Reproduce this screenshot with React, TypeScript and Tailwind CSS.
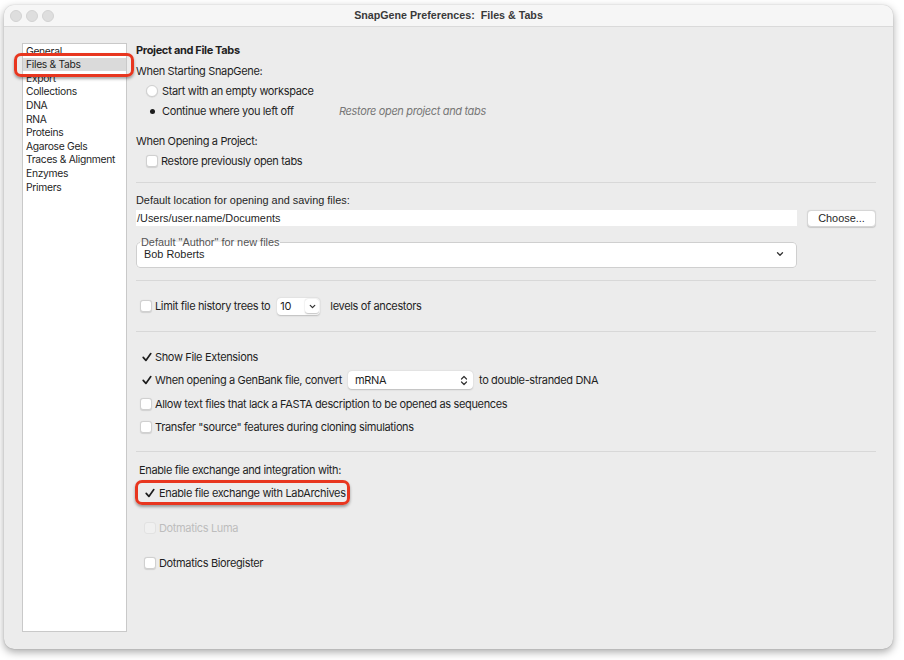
import React from 'react';
import clsx from 'clsx';

const ui = '[font-family:Inter,"Noto_Sans",sans-serif] tracking-[-0.35px]';
const helv = '[font-family:"Liberation_Sans",Arial,sans-serif] tracking-normal';

const sections = [
  'General',
  'Files & Tabs',
  'Export',
  'Collections',
  'DNA',
  'RNA',
  'Proteins',
  'Agarose Gels',
  'Traces & Alignment',
  'Enzymes',
  'Primers',
];

function Check() {
  return (
    <svg width="12" height="12" viewBox="0 0 12 12" className="block">
      <path d="M2.2 6.4 L4.9 9.4 L9.8 2.6" fill="none" stroke="#1d1d1d" strokeWidth="1.7" strokeLinecap="round" strokeLinejoin="round" />
    </svg>
  );
}

function Checkbox({ checked, disabled }: { checked?: boolean; disabled?: boolean }) {
  if (checked) {
    return (
      <span className="flex h-[12px] w-[12px] shrink-0 items-center justify-center">
        <Check />
      </span>
    );
  }
  return (
    <span
      className={clsx(
        'block h-[12px] w-[12px] shrink-0 rounded-[3px] border',
        disabled ? 'border-[#e2e2e2] bg-[#f0f0f0]' : 'border-[#d0d0d0] bg-white shadow-[0_0.5px_1px_rgba(0,0,0,0.12)]'
      )}
    />
  );
}

function Radio({ checked }: { checked?: boolean }) {
  if (checked) {
    return (
      <span className="flex h-[12px] w-[12px] shrink-0 items-center justify-center">
        <span className="block h-[5px] w-[5px] rounded-full bg-[#1d1d1d]" />
      </span>
    );
  }
  return <span className="block h-[12px] w-[12px] shrink-0 rounded-full border border-[#d0d0d0] bg-white shadow-[0_0.5px_1px_rgba(0,0,0,0.12)]" />;
}

function Row({ children, className }: { children: React.ReactNode; className?: string }) {
  return <div className={clsx('flex h-[20px] items-center whitespace-nowrap', className)}>{children}</div>;
}

function Separator({ className }: { className?: string }) {
  return <div className={clsx('h-px bg-[#d8d8d8]', className)} />;
}

export default function App() {
  return (
    <div className={clsx('h-[660px] w-[904px] bg-white pl-[4px] pt-[5px] text-[#1f1f1f]', ui)}>
      <div className="flex h-[644px] w-[889px] flex-col overflow-hidden rounded-[10px] bg-[#ececec] shadow-[0_3px_8px_rgba(0,0,0,0.35),0_0_1px_rgba(0,0,0,0.3)]">
        {/* title bar */}
        <div className="relative flex h-[22px] shrink-0 items-center border-b border-[#dadada] bg-[#f6f6f6] pl-[6px]">
          <div className="flex gap-[4px]">
            <span className="block h-[12px] w-[12px] rounded-full border border-[#d2d2d2] bg-[#dedede]" />
            <span className="block h-[12px] w-[12px] rounded-full border border-[#d2d2d2] bg-[#dedede]" />
            <span className="block h-[12px] w-[12px] rounded-full border border-[#d2d2d2] bg-[#dedede]" />
          </div>
          <div className={clsx('absolute inset-0 flex items-center justify-center whitespace-pre text-[10.7px] font-bold text-[#3a3a3a]', helv)}>
            {'SnapGene Preferences:  Files & Tabs'}
          </div>
        </div>

        {/* body */}
        <div className="flex flex-1 pb-[17px] pl-[18px] pr-[17px] pt-[13px]">
          {/* section list */}
          <div className="relative mt-[3px] w-[105px] border border-[#c9c9c9] bg-white text-[10.3px] tracking-[-0.3px]">
            {sections.map((s) => (
              <div
                key={s}
                className={clsx(
                  'flex h-[13.6px] items-center whitespace-nowrap pl-[3px] leading-none',
                  s === 'Files & Tabs' && 'bg-[#dadada]'
                )}
              >
                {s}
              </div>
            ))}
            <div className="absolute left-[-9px] top-[9px] h-[24px] w-[120px] rounded-[7px] border-[3px] border-[#e8361f] shadow-[0_2px_3px_rgba(0,0,0,0.35)]" />
          </div>

          {/* settings */}
          <div className="ml-[9px] flex flex-1 flex-col text-[11px]">
            <Row className="font-bold">Project and File Tabs</Row>
            <Row className="mt-[1px]">When Starting SnapGene:</Row>
            <Row className="gap-[4px] pl-[10px]">
              <Radio />
              <span>Start with an empty workspace</span>
            </Row>
            <Row className="pl-[10px]">
              <Radio checked />
              <span className="ml-[4px] w-[177px]">Continue where you left off</span>
              <span className="italic text-[#777]">Restore open project and tabs</span>
            </Row>
            <Row className="mt-[10px]">When Opening a Project:</Row>
            <Row className="gap-[3px] pl-[10px]">
              <Checkbox />
              <span>Restore previously open tabs</span>
            </Row>
            <Separator className="mt-[11px]" />

            <Row className={clsx('mt-[7px] text-[10.9px]', helv)}>Default location for opening and saving files:</Row>
            <div className={clsx('flex h-[17px] items-start text-[10.9px]', helv)}>
              <div className="flex h-[16px] w-[661px] items-center bg-white pl-[1px]">/Users/user.name/Documents</div>
              <div className="ml-[10px] flex h-[17px] w-[69px] items-center justify-center rounded-[4px] border border-[#d6d6d6] bg-white shadow-[0_0.5px_1px_rgba(0,0,0,0.15)]">
                Choose...
              </div>
            </div>
            <fieldset className={clsx('mt-[8px] w-[661px] rounded-[4px] border border-[#cfcfcf] bg-white pb-[6px] pl-[7px] pr-[11px] text-[10.9px]', helv)}>
              <legend className="ml-[-4px] px-[1px] leading-[14px] text-[#555]">Default "Author" for new files</legend>
              <div className="-mt-[2px] flex h-[14px] items-center justify-between">
                <span>Bob Roberts</span>
                <svg width="10" height="10" viewBox="0 0 10 10">
                  <path d="M2.5 3.8 L5 6.3 L7.5 3.8" fill="none" stroke="#333" strokeWidth="1.3" strokeLinecap="round" strokeLinejoin="round" />
                </svg>
              </div>
            </fieldset>
            <Separator className="mt-[12px]" />

            <Row className="mt-[15px] pl-[4px]">
              <Checkbox />
              <span className="ml-[3px]">Limit file history trees to</span>
              <div className="ml-[7px] flex h-[17px] w-[43px] items-center justify-between rounded-[4px] bg-white pl-[3px] pr-[1px] shadow-[0_0.5px_1.5px_rgba(0,0,0,0.2)]">
                <span>10</span>
                <span className="flex h-[14px] w-[14px] items-center justify-center rounded-[3px] bg-white shadow-[0_0.5px_1.5px_rgba(0,0,0,0.25)]">
                  <svg width="9" height="9" viewBox="0 0 10 10">
                    <path d="M2.5 3.8 L5 6.3 L7.5 3.8" fill="none" stroke="#333" strokeWidth="1.4" strokeLinecap="round" strokeLinejoin="round" />
                  </svg>
                </span>
              </div>
              <span className="ml-[10px]">levels of ancestors</span>
            </Row>
            <Separator className="mt-[15px]" />

            <Row className="mt-[15px] pl-[5px]">
              <Checkbox checked />
              <span className="ml-[2px]">Show File Extensions</span>
            </Row>
            <Row className="mt-[3px] pl-[5px]">
              <Checkbox checked />
              <span className="ml-[2px]">When opening a GenBank file, convert</span>
              <div className="ml-[6px] flex h-[18px] w-[125px] items-center justify-between rounded-[4px] bg-white pl-[7px] pr-[5px] shadow-[0_0.5px_1.5px_rgba(0,0,0,0.2)]">
                <span>mRNA</span>
                <svg width="8" height="11" viewBox="0 0 8 11">
                  <path d="M1.5 4 L4 1.5 L6.5 4 M1.5 7 L4 9.5 L6.5 7" fill="none" stroke="#333" strokeWidth="1.2" strokeLinecap="round" strokeLinejoin="round" />
                </svg>
              </div>
              <span className="ml-[6px]">to double-stranded DNA</span>
            </Row>
            <Row className="mt-[4px] gap-[3px] pl-[4px]">
              <Checkbox />
              <span>Allow text files that lack a FASTA description to be opened as sequences</span>
            </Row>
            <Row className="mt-[3px] gap-[3px] pl-[4px]">
              <Checkbox />
              <span>Transfer "source" features during cloning simulations</span>
            </Row>
            <Separator className="mt-[14px]" />

            <Row className="mt-[8px] pl-[3px]">Enable file exchange and integration with:</Row>
            <div className="relative mt-[3px]">
              <Row className="gap-[3px] pl-[8px]">
                <Checkbox checked />
                <span>Enable file exchange with LabArchives</span>
              </Row>
              <div className="absolute left-[-1px] top-[-3px] h-[25px] w-[215px] rounded-[7px] border-[3px] border-[#e8361f] shadow-[0_2px_3px_rgba(0,0,0,0.35)]" />
            </div>
            <Row className="mt-[15px] gap-[3px] pl-[8px] text-[#bdbdbd]">
              <Checkbox disabled />
              <span>Dotmatics Luma</span>
            </Row>
            <Row className="mt-[15px] gap-[3px] pl-[8px]">
              <Checkbox />
              <span>Dotmatics Bioregister</span>
            </Row>
          </div>
        </div>
      </div>
    </div>
  );
}
